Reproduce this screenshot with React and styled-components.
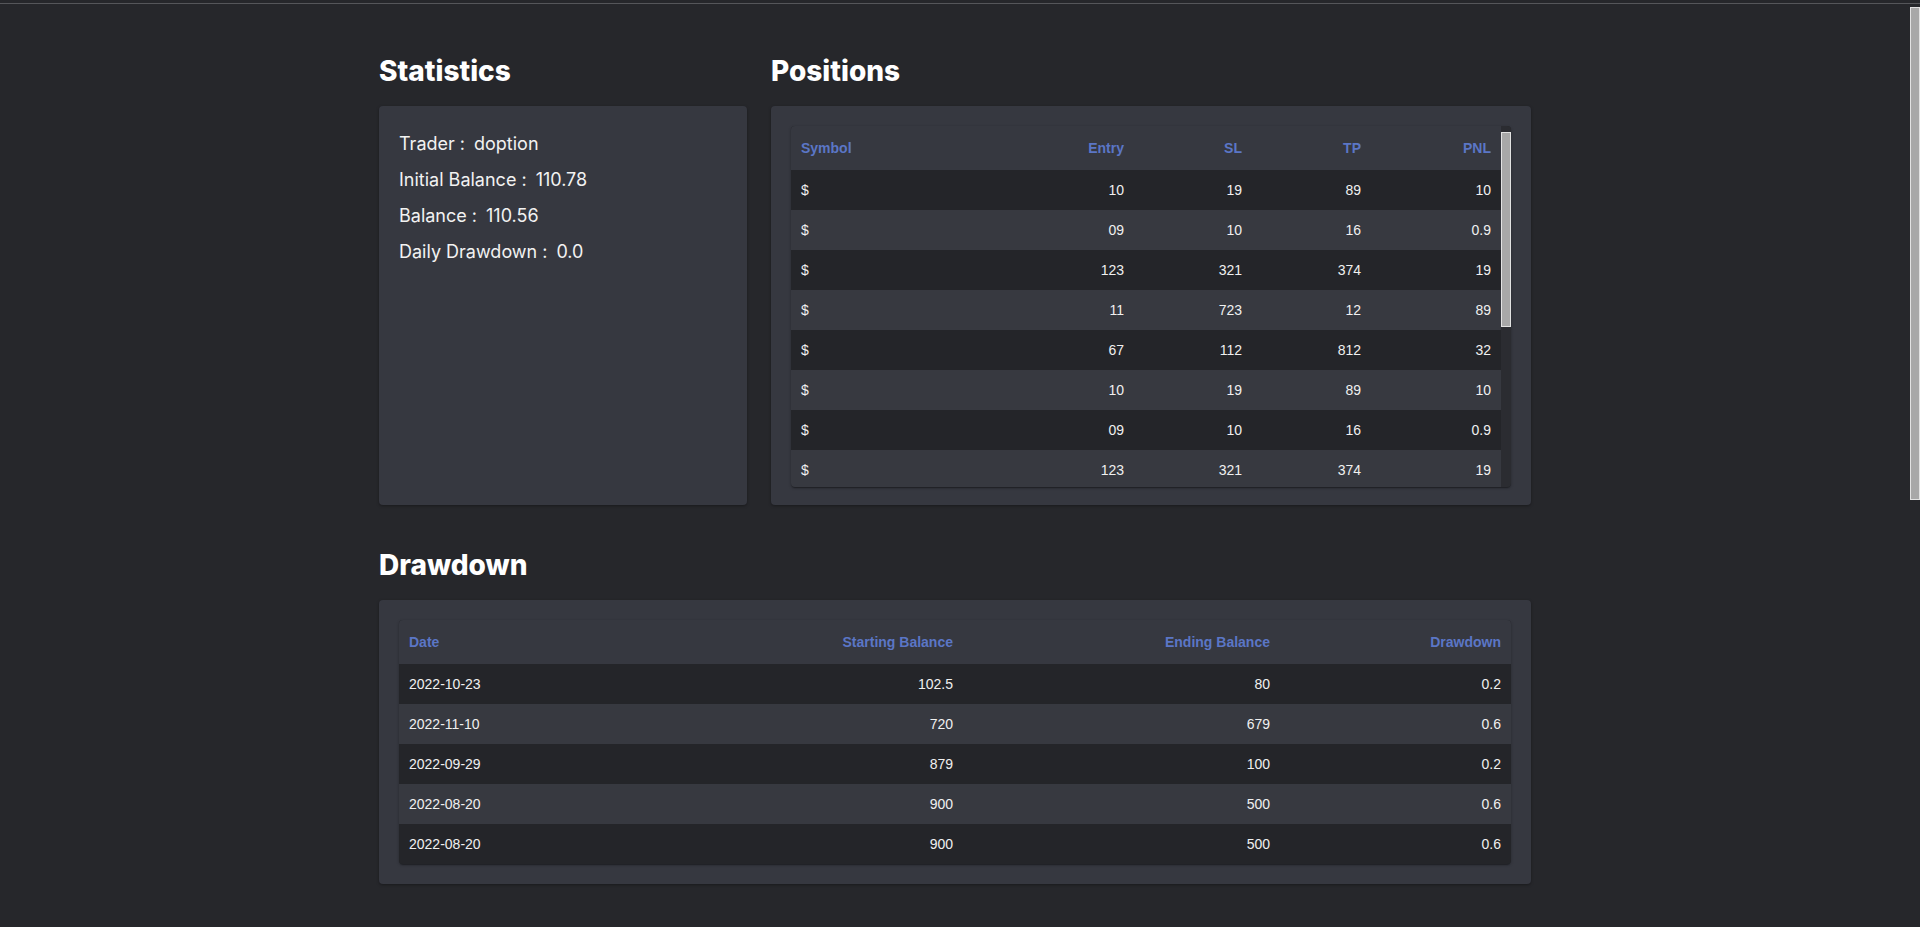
import styled, { createGlobalStyle } from "styled-components";

const GlobalStyle = createGlobalStyle`
  html, body {
    margin: 0;
    padding: 0;
    background: #26272b;
    font-family: "Liberation Sans", Arial, sans-serif;
    color: #ececec;
  }
`;

const POSITIONS = [
  { entry: "10", sl: "19", tp: "89", pnl: "10" },
  { entry: "09", sl: "10", tp: "16", pnl: "0.9" },
  { entry: "123", sl: "321", tp: "374", pnl: "19" },
  { entry: "11", sl: "723", tp: "12", pnl: "89" },
  { entry: "67", sl: "112", tp: "812", pnl: "32" },
];

const DRAWDOWNS = [
  { date: "2022-10-23", start: "102.5", end: "80", dd: "0.2" },
  { date: "2022-11-10", start: "720", end: "679", dd: "0.6" },
  { date: "2022-09-29", start: "879", end: "100", dd: "0.2" },
  { date: "2022-08-20", start: "900", end: "500", dd: "0.6" },
  { date: "2022-08-20", start: "900", end: "500", dd: "0.6" },
];

const STATS = [
  { label: "Trader", value: "doption" },
  { label: "Initial Balance", value: "110.78" },
  { label: "Balance", value: "110.56" },
  { label: "Daily Drawdown", value: "0.0" },
];

export default function App() {
  // the positions list repeats the same five rows
  const positionRows = [...POSITIONS, ...POSITIONS, ...POSITIONS];

  return (
    <>
      <GlobalStyle />
      <TopRule />
      <Shell>
        <Page>
          <Main>
            <TopRow>
              <Column>
                <Heading>Statistics</Heading>
                <StatsCard>
                  {STATS.map((s) => (
                    <StatLine key={s.label}>
                      {s.label} :<StatValue>{s.value}</StatValue>
                    </StatLine>
                  ))}
                </StatsCard>
              </Column>

              <Column>
                <Heading>Positions</Heading>
                <PositionsCard>
                  <TableFrame $height={361}>
                    <Viewport>
                      <Table>
                        <colgroup>
                          <Col $w={171} />
                          <Col $w={172} />
                          <Col $w={118} />
                          <Col $w={119} />
                          <Col $w={130} />
                        </colgroup>
                        <thead>
                          <tr>
                            <Th>Symbol</Th>
                            <Th $right>Entry</Th>
                            <Th $right>SL</Th>
                            <Th $right>TP</Th>
                            <Th $right>PNL</Th>
                          </tr>
                        </thead>
                        <tbody>
                          {positionRows.map((p, i) => (
                            <Row key={i}>
                              <Td>$</Td>
                              <Td $right>{p.entry}</Td>
                              <Td $right>{p.sl}</Td>
                              <Td $right>{p.tp}</Td>
                              <Td $right>{p.pnl}</Td>
                            </Row>
                          ))}
                        </tbody>
                      </Table>
                    </Viewport>
                    <ScrollTrack>
                      <ScrollThumb $top={6} $size={195} />
                    </ScrollTrack>
                  </TableFrame>
                </PositionsCard>
              </Column>
            </TopRow>

            <Section>
              <Heading>Drawdown</Heading>
              <Card>
                <TableFrame>
                  <Viewport>
                    <Table>
                      <colgroup>
                        <Col $w={282} />
                        <Col $w={282} />
                        <Col $w={317} />
                        <Col $w={231} />
                      </colgroup>
                      <thead>
                        <tr>
                          <Th>Date</Th>
                          <Th $right>Starting Balance</Th>
                          <Th $right>Ending Balance</Th>
                          <Th $right>Drawdown</Th>
                        </tr>
                      </thead>
                      <tbody>
                        {DRAWDOWNS.map((d, i) => (
                          <Row key={i}>
                            <Td>{d.date}</Td>
                            <Td $right>{d.start}</Td>
                            <Td $right>{d.end}</Td>
                            <Td $right>{d.dd}</Td>
                          </Row>
                        ))}
                      </tbody>
                    </Table>
                  </Viewport>
                </TableFrame>
              </Card>
            </Section>
          </Main>
        </Page>

        <PageScrollbar>
          <ScrollThumb $top={3} $size={493} />
        </PageScrollbar>
      </Shell>
    </>
  );
}

const TopRule = styled.div`
  height: 1px;
  margin-top: 3px;
  background: #55565a;
`;

const Shell = styled.div`
  display: flex;
  align-items: flex-start;
  height: 923px;
  overflow: hidden;
`;

const Page = styled.div`
  flex: 1;
  min-width: 0;
`;

const PageScrollbar = styled.div`
  width: 10px;
  height: 100%;
  flex-shrink: 0;
  display: flex;
  flex-direction: column;
`;

const Main = styled.main`
  width: 1152px;
  margin: 0 auto;
  padding-top: 49px;
`;

const TopRow = styled.div`
  display: grid;
  grid-template-columns: 368px 760px;
  column-gap: 24px;
`;

const Column = styled.div`
  display: flex;
  flex-direction: column;
`;

const Section = styled.section`
  margin-top: 42px;
  display: flex;
  flex-direction: column;
`;

const Heading = styled.h2`
  margin: 0 0 17px;
  font-family: Inter, "Noto Sans", sans-serif;
  font-weight: 800;
  font-size: 28px;
  line-height: 36px;
  color: #ffffff;
`;

const Card = styled.div`
  flex: 1;
  background: #363840;
  border-radius: 4px;
  padding: 20px;
  box-shadow: 0 1px 3px rgba(0, 0, 0, 0.35);
`;

const StatsCard = styled(Card)`
  padding: 20px;
`;

const PositionsCard = styled(Card)`
  padding: 20px 20px 18px;
`;

const StatLine = styled.div`
  font-family: Inter, "Noto Sans", sans-serif;
  font-size: 18px;
  line-height: 36px;
  color: #f2f2f2;
`;

const StatValue = styled.span`
  margin-left: 9px;
`;

const TableFrame = styled.div`
  display: flex;
  height: ${(p) => (p.$height ? `${p.$height}px` : "auto")};
  overflow: hidden;
  border-radius: 4px;
  background: #242529;
  box-shadow: 0 2px 1px -1px rgba(0, 0, 0, 0.25), 0 1px 3px rgba(0, 0, 0, 0.3);
`;

const Viewport = styled.div`
  flex: 1;
  min-width: 0;
  overflow: hidden;
`;

const ScrollTrack = styled.div`
  width: 10px;
  flex-shrink: 0;
  display: flex;
  flex-direction: column;
  background: #2b2c31;
`;

const ScrollThumb = styled.div`
  box-sizing: border-box;
  margin-top: ${(p) => p.$top}px;
  height: ${(p) => p.$size}px;
  background: #a8a8a8;
  border: 1px solid #e2e2e2;
`;

const Table = styled.table`
  width: 100%;
  border-collapse: collapse;
  table-layout: fixed;
  font-size: 14px;
`;

const Col = styled.col`
  width: ${(p) => p.$w}px;
`;

const Th = styled.th`
  height: 44px;
  padding: 0 10px;
  background: #363840;
  color: #5b76c6;
  font-weight: 700;
  text-align: ${(p) => (p.$right ? "right" : "left")};
`;

const Row = styled.tr`
  height: 40px;
  background: #242529;

  &:nth-child(even) {
    background: #373940;
  }
`;

const Td = styled.td`
  padding: 0 10px;
  color: #f0f0f0;
  text-align: ${(p) => (p.$right ? "right" : "left")};
`;
